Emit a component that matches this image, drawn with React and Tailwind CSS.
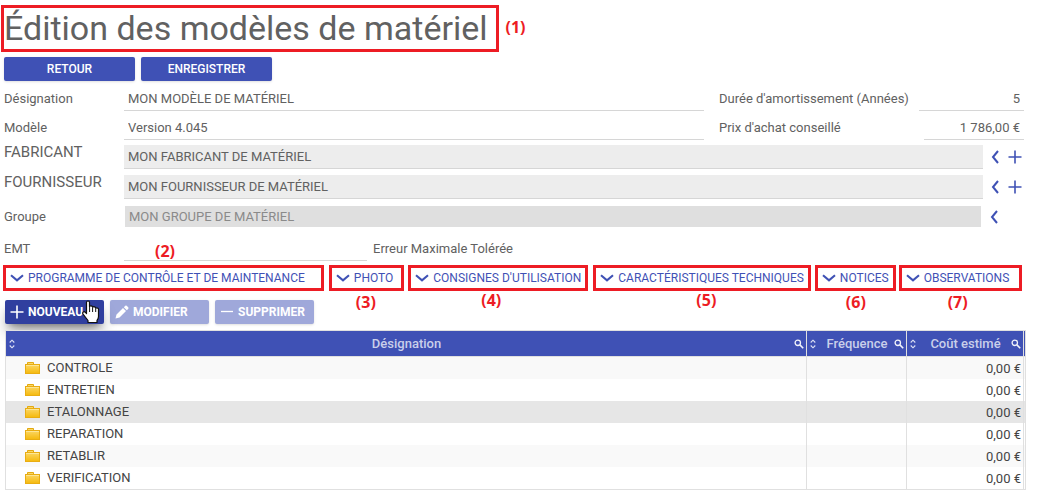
import React from 'react';

const tabs = [
    { label: 'PROGRAMME DE CONTRÔLE ET DE MAINTENANCE', box: 'mr-[5px] pr-4' },
    { label: 'PHOTO', mark: '(3)', box: 'mr-1 pr-2', markPos: 'left-6 top-[22px]' },
    { label: "CONSIGNES D'UTILISATION", mark: '(4)', box: 'mr-[5px] pr-1', markPos: 'left-[70px] top-5' },
    { label: 'CARACTÉRISTIQUES TECHNIQUES', mark: '(5)', box: 'mr-1 pr-1', markPos: 'left-[100px] top-5' },
    { label: 'NOTICES', mark: '(6)', box: 'mr-[3px] pr-1', markPos: 'left-7 top-[22px]' },
    { label: 'OBSERVATIONS', mark: '(7)', box: 'pr-2.5', markPos: 'left-[46px] top-[22px]' }
];

const rows = ['CONTROLE', 'ENTRETIEN', 'ETALONNAGE', 'REPARATION', 'RETABLIR', 'VERIFICATION'];

const columns = [
    { title: 'Désignation' },
    { title: 'Fréquence' },
    { title: 'Coût estimé' }
];

const Mark = ({ className, children }) => (
    <span className={`absolute z-10 font-['Open_Sans',sans-serif] text-base font-bold leading-6 text-[#ed1c24] ${className}`}>
        {children}
    </span>
);

const PlusIcon = ({ className = '' }) => (
    <svg className={className} width="14" height="14" viewBox="0 0 14 14" fill="none" stroke="currentColor" strokeWidth="1.6">
        <path d="M7 0.5v13M0.5 7h13" />
    </svg>
);

const ChevronLeftIcon = () => (
    <svg width="8" height="14" viewBox="0 0 8 14" fill="none" stroke="currentColor" strokeWidth="2">
        <path d="M7 1L2 7l5 6" />
    </svg>
);

const ChevronDownIcon = () => (
    <svg className="shrink-0" width="14" height="8" viewBox="0 0 14 8" fill="none" stroke="currentColor" strokeWidth="2.1">
        <path d="M1 1.3l6 5 6-5" />
    </svg>
);

const PencilIcon = () => (
    <svg width="14" height="14" viewBox="0 0 14 14" fill="currentColor">
        <path d="M0.5 13.5l1-4L8 3l3 3-6.5 6.5zM8.8 2.2L10.3 0.7Q11 0.2 11.7 0.8L13.2 2.3Q13.8 3 13.3 3.7L11.8 5.2z" />
    </svg>
);

const MinusIcon = () => (
    <svg width="14" height="14" viewBox="0 0 14 14" stroke="currentColor" strokeWidth="1.3">
        <path d="M1 6.5h12" />
    </svg>
);

const SortIcon = () => (
    <svg className="shrink-0" width="6" height="10" viewBox="0 0 6 10" fill="none" stroke="#dfe3f5" strokeWidth="1.1">
        <path d="M0.7 3.5L3 1.2 5.3 3.5M0.7 6.5L3 8.8 5.3 6.5" />
    </svg>
);

const SearchIcon = () => (
    <svg width="10" height="10" viewBox="0 0 10 10" fill="none" stroke="#f1f3fb">
        <circle cx="3.8" cy="3.8" r="2.7" strokeWidth="1.3" />
        <path d="M5.9 5.9L9.2 9.2" strokeWidth="1.6" />
    </svg>
);

const FolderIcon = () => (
    <svg className="shrink-0" width="15" height="12" viewBox="0 0 15 12">
        <defs>
            <linearGradient id="folder" x1="0" y1="0" x2="0" y2="1">
                <stop offset="0" stopColor="#fbd766" />
                <stop offset="1" stopColor="#f5b90c" />
            </linearGradient>
        </defs>
        <path d="M2.5 3V0.5h6V3" fill="#fbd766" stroke="#e3a90f" />
        <rect x="0.5" y="2.5" width="14" height="9" fill="url(#folder)" stroke="#e9ad12" />
        <path d="M1 3.5h13" stroke="#fce595" />
    </svg>
);

const HandCursor = () => (
    <svg className="pointer-events-none absolute top-0 left-[77px] z-10" width="18" height="24" viewBox="0 0 18 24">
        <path
            d="M4.5 2.5Q4.5 1 6 1T7.5 2.500V6.500Q8 5.700 9.200 5.900T10.600 7.200Q11.500 6.400 12.600 6.900T13.700 8.200Q15 7.500 15.900 8.200T16.500 9.600V16.500Q16.500 18.500 15 20.300V22.500H6V20.500Q5 19 3.500 17.300L1 14Q0.300 12.500 1.300 11.900T3.400 12.400L4.500 13.500Z"
            fill="#fff"
            stroke="#111"
            strokeWidth="1.2"
            strokeLinejoin="round"
        />
        <path d="M7.6 6.500v5.500M10.600 7.500v4.500M13.700 8.500v3.500" stroke="#111" strokeWidth="1" />
    </svg>
);

const LinkedField = ({ id, label, value, canAdd }) => (
    <div className="flex h-6 items-center">
        <label htmlFor={id} className="mb-2.5 w-[120px] shrink-0 text-[15px] leading-4">{label}</label>
        <input id={id} defaultValue={value} className="h-6 min-w-0 flex-1 border-b border-[#d6d6d6] bg-[#ededed] px-1" />
        <div className="ml-2 flex w-[33px] items-center gap-[9px] text-[#3f51b5]">
            <button type="button" aria-label={`Choisir ${label}`}><ChevronLeftIcon /></button>
            {canAdd && <button type="button" aria-label={`Ajouter ${label}`}><PlusIcon /></button>}
        </div>
    </div>
);

const TextField = ({ id, label, value }) => (
    <>
        <label htmlFor={id} className="w-[120px] shrink-0">{label}</label>
        <input id={id} defaultValue={value} className="h-6 min-w-0 flex-1 border-b border-[#d6d6d6] px-1" />
    </>
);

export default function App() {
    return (
        <div className="font-[Roboto,sans-serif] bg-white text-[13px] leading-4 text-[#616161]">
            {/* Title */}
            <div className="flex pl-px pt-[5px]">
                <div className="relative h-[47px] border-3 border-[#ed1c24] pr-2">
                    <h1 className="text-[34px] font-normal leading-[41px]">Édition des modèles de matériel</h1>
                    <Mark className="left-full top-[7px] ml-2.5">(1)</Mark>
                </div>
            </div>

            <div className="flex gap-1.5 pl-1 pt-[5px]">
                <button type="button" className="h-6 w-[131px] rounded-xs bg-[#3f51b5] text-xs font-medium text-white shadow-sm">RETOUR</button>
                <button type="button" className="h-6 w-[131px] rounded-xs bg-[#3f51b5] text-xs font-medium text-white shadow-sm">ENREGISTRER</button>
            </div>

            {/* Form */}
            <div className="pl-1 pr-[17px] pt-1.5">
                <div className="flex items-center">
                    <TextField id="designation" label="Désignation" value="MON MODÈLE DE MATÉRIEL" />
                    <label htmlFor="duree" className="ml-[15px] w-[200px] shrink-0">Durée d'amortissement (Années)</label>
                    <input id="duree" defaultValue="5" className="h-6 w-[105px] border-b border-[#d6d6d6] px-1 text-right" />
                </div>
                <div className="mt-[5px] flex items-center">
                    <TextField id="modele" label="Modèle" value="Version 4.045" />
                    <label htmlFor="prix" className="ml-[15px] w-[205px] shrink-0">Prix d'achat conseillé</label>
                    <input id="prix" defaultValue="1 786,00 €" className="h-6 w-[100px] border-b border-[#d6d6d6] px-1 text-right" />
                </div>
                <div className="mt-[5px] flex flex-col gap-1.5">
                    <LinkedField id="fabricant" label="FABRICANT" value="MON FABRICANT DE MATÉRIEL" canAdd />
                    <LinkedField id="fournisseur" label="FOURNISSEUR" value="MON FOURNISSEUR DE MATÉRIEL" canAdd />
                </div>
                <div className="mt-[7px] flex items-center">
                    <label htmlFor="groupe" className="w-[121px] shrink-0">Groupe</label>
                    <input id="groupe" disabled defaultValue="MON GROUPE DE MATÉRIEL" className="h-[21px] min-w-0 flex-1 bg-[#dfdfdf] px-1 text-[#8a8a8a]" />
                    <button type="button" aria-label="Choisir Groupe" className="ml-[9px] w-[34px] text-[#3f51b5]"><ChevronLeftIcon /></button>
                </div>
                <div className="relative mt-2.5 flex items-center">
                    <label htmlFor="emt" className="w-[120px] shrink-0">EMT</label>
                    <input id="emt" className="h-6 w-[243px] border-b border-[#d6d6d6] px-1" />
                    <span className="ml-1.5">Erreur Maximale Tolérée</span>
                    <Mark className="left-[151px] top-0.5">(2)</Mark>
                </div>
            </div>

            {/* Section tabs */}
            <div className="mt-1 flex pl-[3px]">
                {tabs.map(tab => (
                    <div key={tab.label} className={`relative h-[26px] border-3 border-[#ed1c24] pl-1 ${tab.box}`}>
                        <button type="button" className="flex h-5 items-center gap-1 whitespace-nowrap text-xs text-[#3f51b5]">
                            <ChevronDownIcon />
                            {tab.label}
                        </button>
                        {tab.mark && <Mark className={tab.markPos}>{tab.mark}</Mark>}
                    </div>
                ))}
            </div>

            <div className="mt-[9px] flex gap-1.5 pl-[5px] text-xs font-bold text-white">
                <div className="relative">
                    <button type="button" className="flex h-6 w-[99px] items-center gap-1 rounded-xs bg-[#303f9f] pl-[5px] shadow-lg shadow-black/40">
                        <PlusIcon />
                        NOUVEAU
                    </button>
                    <HandCursor />
                </div>
                <button type="button" className="flex h-6 w-[99px] items-center gap-1 rounded-xs bg-[#9fa8da] pl-[5px] shadow-sm">
                    <PencilIcon />
                    MODIFIER
                </button>
                <button type="button" className="flex h-6 w-[99px] items-center gap-1 rounded-xs bg-[#9fa8da] pl-[5px] shadow-sm">
                    <MinusIcon />
                    SUPPRIMER
                </button>
            </div>

            {/* Operations */}
            <div className="relative mt-1.5 pl-[5px] pr-[15px]">
                <table className="w-full table-fixed border-collapse border border-[#e0e0e0] bg-white text-[#444]">
                    <colgroup>
                        <col />
                        <col className="w-[100px]" />
                        <col className="w-[117px]" />
                        <col className="w-[2px]" />
                    </colgroup>
                    <thead>
                        <tr className="h-[26px] border-b border-[#e0e0e0] bg-[#3f51b5] text-[#c9cfea]">
                            {columns.map(col => (
                                <th key={col.title} className="border-r border-[#e0e0e0] p-0 font-medium">
                                    <div className="flex items-center pl-[3px] pr-0.5">
                                        <SortIcon />
                                        <span className="flex-1 whitespace-nowrap pl-1 text-center">{col.title}</span>
                                        <button type="button" aria-label={`Rechercher ${col.title}`}><SearchIcon /></button>
                                    </div>
                                </th>
                            ))}
                            <th className="p-0"></th>
                        </tr>
                    </thead>
                    <tbody>
                        {rows.map((row, i) => (
                            <tr key={row} className={`h-[22px] last:h-[23px] ${i === 2 ? 'bg-[#e6e6e6]' : i % 2 === 0 ? 'bg-[#f9f9f9]' : 'bg-white'}`}>
                                <td className="border-r border-[#e0e0e0] p-0">
                                    <div className="flex items-center gap-[7px] pl-[19px]">
                                        <FolderIcon />
                                        {row}
                                    </div>
                                </td>
                                <td className="border-r border-[#e0e0e0] p-0"></td>
                                <td className="border-r border-[#e0e0e0] pb-0 pl-0 pr-0.5 pt-0.5 text-right">0,00 €</td>
                                <td className="p-0"></td>
                            </tr>
                        ))}
                    </tbody>
                </table>
            </div>
        </div>
    );
}
